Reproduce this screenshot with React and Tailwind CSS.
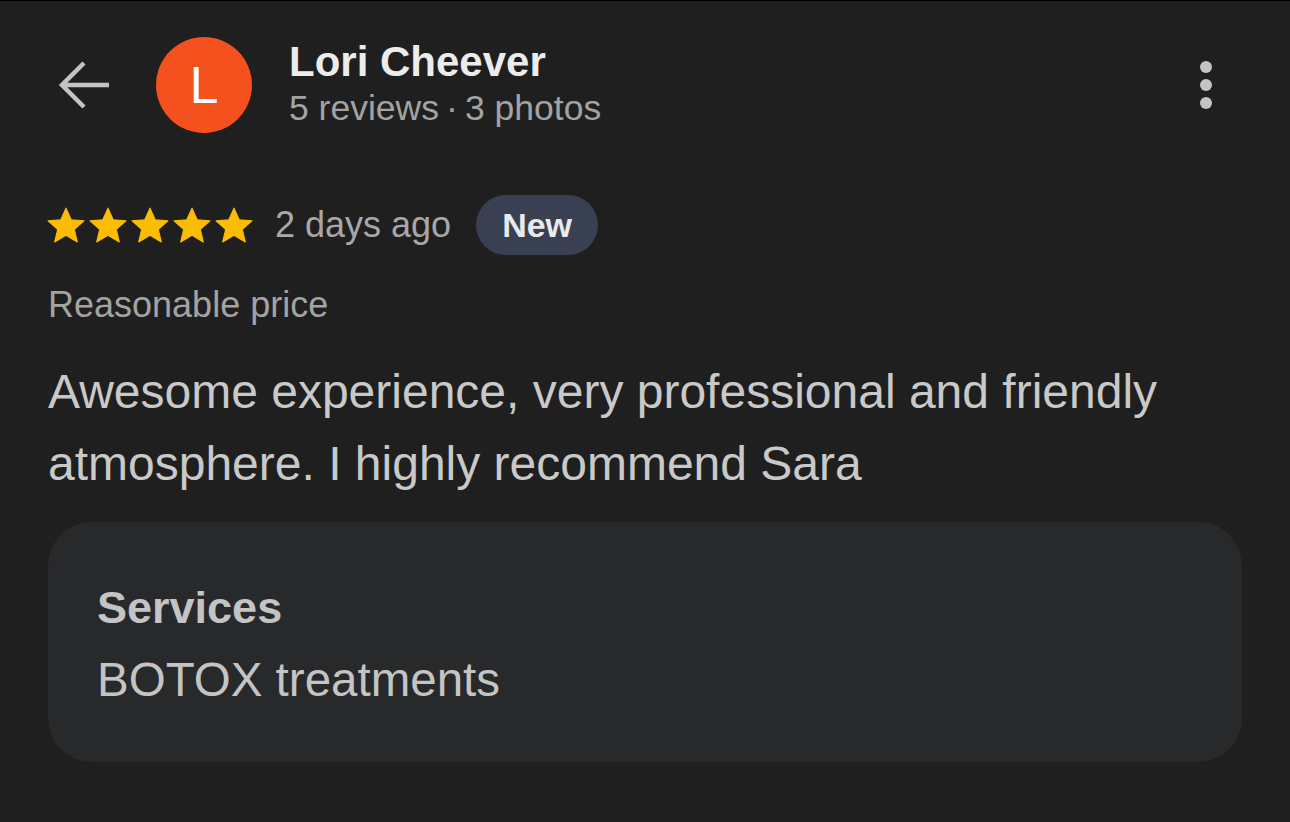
import React from 'react';

const font = { fontFamily: '"Liberation Sans", Arial, sans-serif' };

function Star() {
  return (
    <svg viewBox="2 2 20 20" className="w-[38px] h-[37px]" fill="#fbbc04">
      <path d="M12 2.6l2.8 6.3 6.9.6-5.2 4.6 1.6 6.8-6.1-3.6-6.1 3.6 1.6-6.8-5.2-4.6 6.9-.6z" strokeLinejoin="round" stroke="#fbbc04" strokeWidth="0.6" />
    </svg>
  );
}

export default function App() {
  return (
    <div className="w-[1290px] h-[822px] bg-[#1f1f1f] border-t border-black overflow-hidden" style={font}>
      {/* header */}
      <div className="flex items-center h-[166px] pt-[2px] pl-[56px] pr-[78px]">
        <svg viewBox="0 0 56 56" className="w-[56px] h-[56px]" fill="none" stroke="#c4c4c4" strokeWidth="4.5">
          <path d="M53 28H7M28 6L6 28l22 22" />
        </svg>
        <div className="ml-[44px] w-[96px] h-[96px] rounded-full bg-[#f4511e] flex items-center justify-center text-white text-[52px] leading-none">
          L
        </div>
        <div className="ml-[37px] flex flex-col">
          <div className="text-[42px] font-bold text-[#ececec] leading-[46px]">Lori Cheever</div>
          <div className="text-[35.5px] text-[#a3a3a3] leading-[47px]">5 reviews{'\u2009·\u2009'}3 photos</div>
        </div>
        <div className="ml-auto flex flex-col gap-[6px] items-center">
          <span className="w-[12px] h-[12px] rounded-full bg-[#c4c4c4]" />
          <span className="w-[12px] h-[12px] rounded-full bg-[#c4c4c4]" />
          <span className="w-[12px] h-[12px] rounded-full bg-[#c4c4c4]" />
        </div>
      </div>

      <div className="px-[48px]">
        {/* rating row */}
        <div className="flex items-center h-[60px] mt-[28px]">
          <div className="flex gap-[4px] ml-[-1px]">
            <Star /><Star /><Star /><Star /><Star />
          </div>
          <span className="ml-[22px] text-[36px] text-[#a8a8a8]">2 days ago</span>
          <span className="ml-[25px] h-[60px] px-[26px] rounded-full bg-[#394051] text-[#e8eaee] text-[34px] font-bold flex items-center">
            New
          </span>
        </div>

        <div className="mt-[30px] text-[36px] text-[#a3a3a3] leading-[40px]">Reasonable price</div>

        <p className="mt-[31px] text-[48px] text-[#c9c9c9] leading-[72px]">
          Awesome experience, very professional and friendly<br />
          atmosphere. I highly recommend Sara
        </p>

        <div className="mt-[22px] h-[240px] rounded-[44px] bg-[#28292b] px-[49px] pt-[58px]">
          <div className="text-[45px] font-bold text-[#c4c4c4] leading-[56px]">Services</div>
          <div className="text-[47.5px] text-[#c4c4c4] leading-[60px] mt-[14px]">BOTOX treatments</div>
        </div>
      </div>
    </div>
  );
}
